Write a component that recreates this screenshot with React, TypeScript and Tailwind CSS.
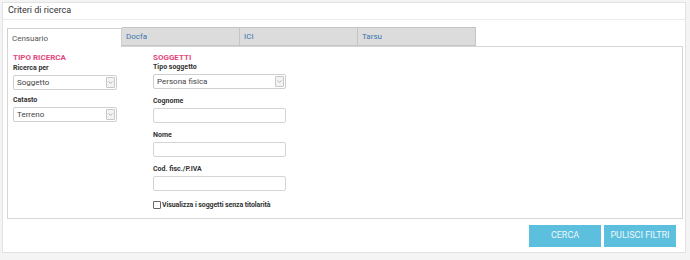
import { ChevronDown } from 'lucide-react';

function Select({ value, width }: { value: string; width: string }) {
    return (
        <div className={`flex items-center h-[15px] ${width} border border-[#cfcfcf] rounded-[2px] bg-white pl-[3px]`}>
            <span className="flex-1 text-[8px] text-[#444]">{value}</span>
            <div className="flex items-center justify-center w-[9px] h-[11px] mr-[1px] border border-[#c8c8c8] bg-[#f3f3f3] rounded-[1px]">
                <ChevronDown size={7} strokeWidth={2} className="text-[#888]" />
            </div>
        </div>
    );
}

function Field({ label, children }: { label: string; children: React.ReactNode }) {
    return (
        <div className="flex flex-col gap-[2px]">
            <span className="text-[7px] font-bold text-[#333] leading-[9px]">{label}</span>
            {children}
        </div>
    );
}

function TextInput() {
    return <div className="h-[15px] w-[133px] border border-[#d4d4d4] rounded-[2px] bg-white" />;
}

export default function App() {
    const tabs = ['Censuario', 'Docfa', 'ICI', 'Tarsu'];
    return (
        <div className="w-[690px] h-[260px] bg-[#f4f4f4] p-[2px] font-['Roboto',sans-serif]">
            <div className="w-[684px] h-[251px] bg-white border border-[#e2e2e2] flex flex-col">
                <div className="h-[17px] flex items-center px-[5px] border-b border-[#ececec] text-[9px] text-[#333]">
                    Criteri di ricerca
                </div>
                <div className="px-[4px] pt-[7px] flex flex-col">
                    <div className="flex h-[19px]">
                        {tabs.map((t, i) => (
                            <div
                                key={t}
                                className={
                                    i === 0
                                        ? 'w-[115px] flex items-center pl-[4px] pt-[1px] text-[8px] text-[#555] bg-white border border-b-0 border-[#cfcfcf] relative top-[1px] z-10 h-[19px]'
                                        : 'w-[118px] flex items-center pl-[4px] pt-[1px] text-[8px] text-[#3a76b0] bg-[#dcdcdc] border border-l-0 border-[#c4c4c4]'
                                }
                            >
                                {t}
                            </div>
                        ))}
                    </div>
                    <div className="h-[173px] w-[676px] border border-[#d6d6d6] flex pt-[6px] pl-[5px]">
                        <div className="w-[140px] flex flex-col">
                            <div className="text-[8px] font-bold text-[#e2477d] leading-[10px] mb-[1px]">TIPO RICERCA</div>
                            <div className="flex flex-col gap-[6px]">
                                <Field label="Ricerca per">
                                    <Select value="Soggetto" width="w-[104px]" />
                                </Field>
                                <Field label="Catasto">
                                    <Select value="Terreno" width="w-[104px]" />
                                </Field>
                            </div>
                        </div>
                        <div className="flex flex-col">
                            <div className="text-[8px] font-bold text-[#e2477d] leading-[10px]">SOGGETTI</div>
                            <div className="flex flex-col gap-[8px]">
                                <Field label="Tipo soggetto">
                                    <Select value="Persona fisica" width="w-[133px]" />
                                </Field>
                                <Field label="Cognome">
                                    <TextInput />
                                </Field>
                                <Field label="Nome">
                                    <TextInput />
                                </Field>
                                <Field label="Cod. fisc./P.IVA">
                                    <TextInput />
                                </Field>
                                <label className="flex items-center gap-[1px] mt-[1px]">
                                    <span className="w-[8px] h-[8px] border border-[#666] rounded-[1px] bg-white" />
                                    <span className="text-[7px] font-bold text-[#333] tracking-[-0.1px]">Visualizza i soggetti senza titolarità</span>
                                </label>
                            </div>
                        </div>
                    </div>
                    <div className="flex justify-end gap-[3px] pr-[5px] pt-[6px]">
                        <button className="w-[72px] h-[22px] bg-[#5bbfdd] text-[#eef8fc] text-[9px]">CERCA</button>
                        <button className="w-[72px] h-[22px] bg-[#5bbfdd] text-[#eef8fc] text-[9px]">PULISCI FILTRI</button>
                    </div>
                </div>
            </div>
        </div>
    );
}
